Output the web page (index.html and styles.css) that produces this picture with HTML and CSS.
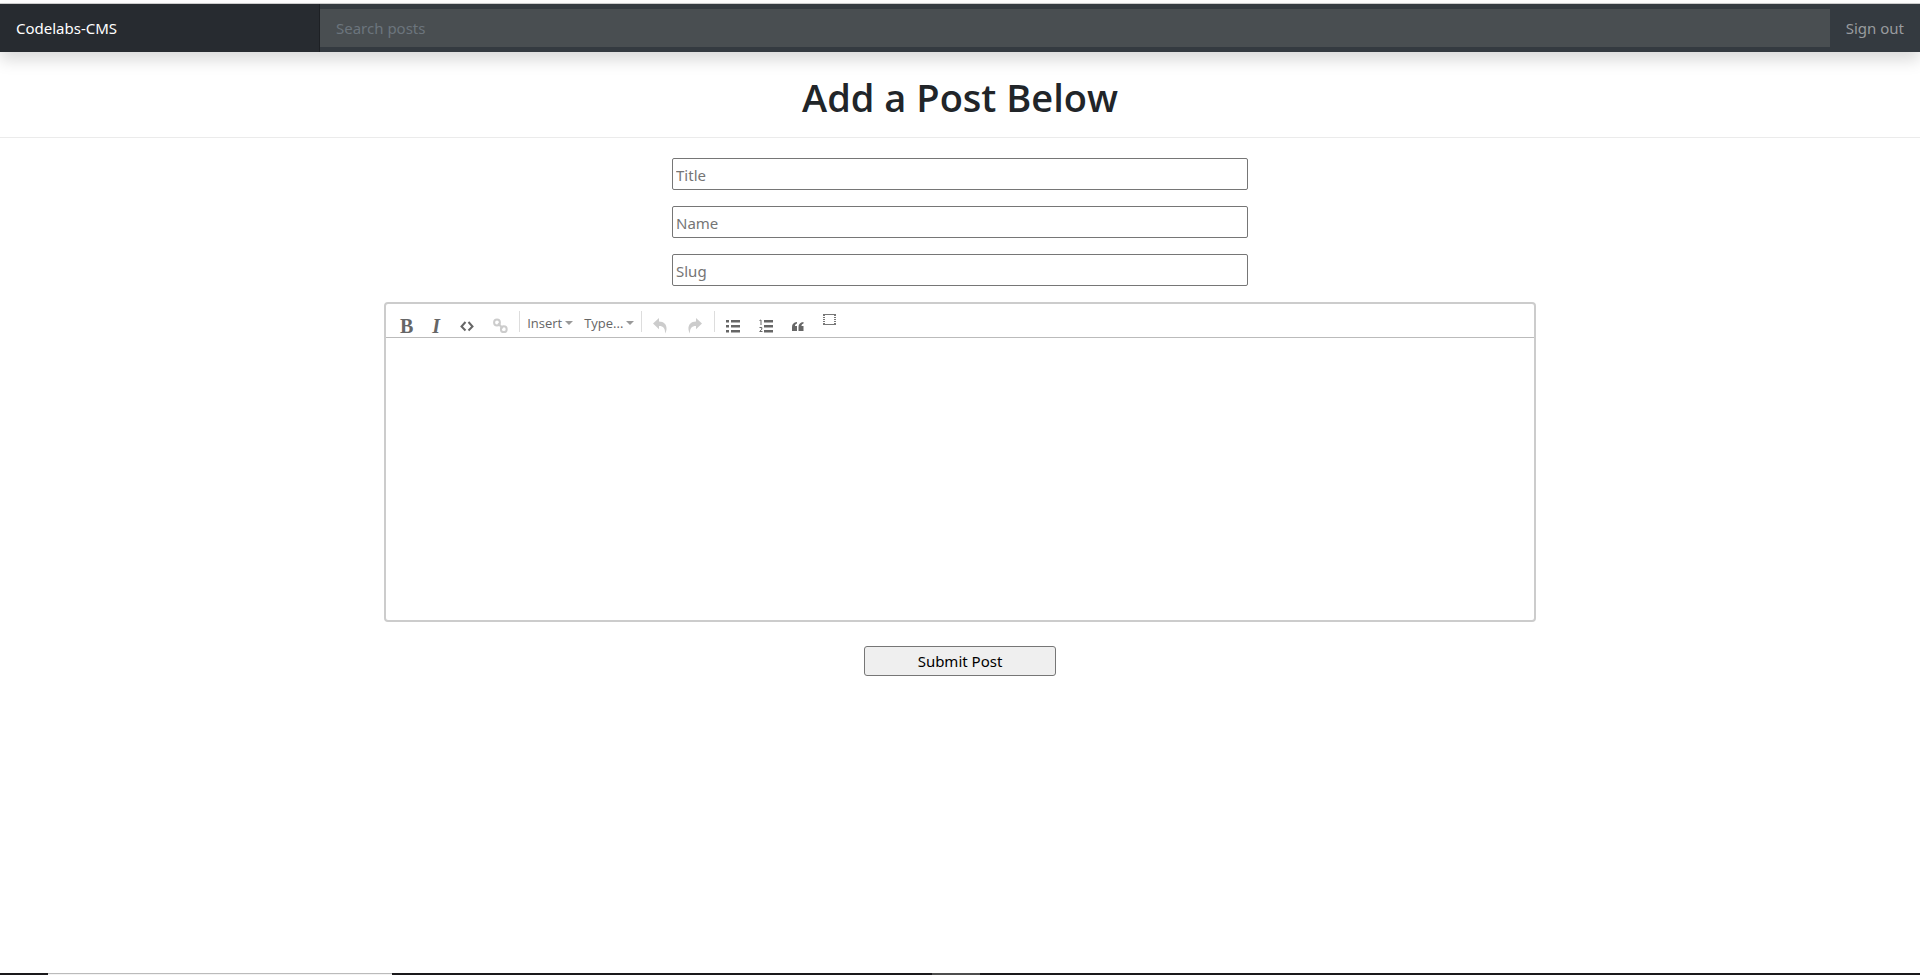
FILE: index.html
```html
<!DOCTYPE html>
<html lang="en">
<head>
<meta charset="utf-8">
<title>Codelabs-CMS</title>
<link rel="stylesheet" href="styles.css">
</head>
<body>
<nav class="navbar">
  <a class="brand" href="#">Codelabs-CMS</a>
  <input class="search" type="text" placeholder="Search posts" aria-label="Search posts">
  <a class="signout" href="#">Sign out</a>
</nav>
<main class="main">
  <h1 class="heading">Add a Post Below</h1>
  <form class="form">
    <input class="field" type="text" placeholder="Title" aria-label="Title">
    <input class="field" type="text" placeholder="Name" aria-label="Name">
    <input class="field" type="text" placeholder="Slug" aria-label="Slug">
    <div class="editor">
      <div class="toolbar">
        <button class="tool letter" type="button" title="Bold">B</button>
        <button class="tool letter italic" type="button" title="Italic">I</button>
        <button class="tool" type="button" title="Code"><svg width="15" height="16" viewBox="0 0 15 16" fill="none" stroke="currentColor" stroke-width="2"><path d="M6.500 4 2.500 8.500l4 4M9.500 4l4 4.500-4 4"/></svg></button>
        <button class="tool off" type="button" title="Link" disabled><svg width="15" height="16" viewBox="0 0 15 16" fill="none" stroke="currentColor" stroke-width="2"><circle cx="4" cy="4.500" r="2.900"/><circle cx="10.800" cy="11.200" r="2.900"/><path d="M5 5.500l4.800 4.800"/></svg></button>
        <span class="sep"></span>
        <button class="drop" type="button">Insert</button>
        <button class="drop" type="button">Type...</button>
        <span class="sep"></span>
        <button class="tool off" type="button" title="Undo" disabled><svg width="15" height="16" viewBox="0 0 15 16" fill="currentColor"><path d="M0 5.500 6 0v3.500c5 0 8 3 7.500 8-.2 1.500-.6 2.600-1.500 4 .4-5-1.500-7.500-6-7.500v3.200z"/></svg></button>
        <button class="tool off" type="button" title="Redo" disabled><svg width="16" height="16" viewBox="0 0 16 16" fill="currentColor"><path d="M15 5.500 9 0v3.500c-5 0-8 3-7.500 8 .2 1.500.6 2.600 1.500 4-.4-5 1.500-7.500 6-7.500v3.200z"/></svg></button>
        <span class="sep"></span>
        <button class="tool" type="button" title="Bullet list"><svg width="14" height="16" viewBox="0 0 14 16" fill="currentColor"><path d="M0 2h3v2.500H0zM0 7h3v2.500H0zM0 12h3v2.500H0zM5 2h9v2.500H5zM5 7h9v2.500H5zM5 12h9v2.500H5z"/></svg></button>
        <button class="tool" type="button" title="Numbered list"><svg width="14" height="16" viewBox="0 0 14 16" fill="currentColor"><path d="M5 2h9v2.500H5zM5 7h9v2.500H5zM5 12h9v2.500H5z"/><path d="M.5 2.500 2 2v5M.5 9.500h2.300v1.700L.7 13.500H3.500" fill="none" stroke="currentColor"/></svg></button>
        <button class="tool" type="button" title="Quote"><svg width="12" height="16" viewBox="0 0 12 16" fill="currentColor"><path d="M5 4v1.500C3.500 6 3 6.800 3 8h2v5H0V9c0-2.800 1.500-4.500 5-5zM11.500 4v1.500C10 6 9.500 6.800 9.500 8h2v5h-5V9c0-2.800 1.500-4.500 5-5z"/></svg></button>
        <button class="tool box" type="button" title="Select node"><svg width="13" height="12" viewBox="0 0 13 12" fill="none" stroke="#777"><path d="M0 .5h13M0 10.500h13"/><path d="M1 1v10M12 1v10" stroke-width="2" stroke-dasharray="1 1"/></svg></button>
      </div>
      <div class="content" contenteditable="true" role="textbox" aria-label="Post content"></div>
    </div>
    <button class="submit" type="submit">Submit Post</button>
  </form>
</main>
<div class="taskbar"><span class="task open"></span><span class="task active"></span></div>
</body>
</html>
```
FILE: styles.css
```css
* { box-sizing: border-box; }
body {
  margin: 0;
  min-height: 100vh;
  display: flex;
  flex-direction: column;
  background: #fff;
  color: #212529;
  font: 15px/24px "Noto Sans", "Open Sans", sans-serif;
}
input, button { font: inherit; }
.navbar {
  display: flex;
  align-items: center;
  height: 48px;
  margin-top: 4px;
  background: #343a40;
  box-shadow: 0 -1px 0 #ccc, 0 8px 16px rgba(0, 0, 0, .15);
}
.brand {
  width: 16.6667%;
  padding: 12px 16px;
  background: rgba(0, 0, 0, .25);
  box-shadow: inset -1px 0 0 rgba(0, 0, 0, .25);
  color: #fff;
  text-decoration: none;
}
.search {
  flex: 1;
  min-width: 0;
  height: 38px;
  padding: 0 16px;
  border: 0;
  background: #494e51;
  color: #fff;
}
.search::placeholder { color: #6c757d; }
.signout { padding: 0 16px; color: #999c9f; text-decoration: none; }
.main { flex: 1; }
.heading {
  margin: 0 0 20px;
  padding: 21px 0 16px;
  border-bottom: 1px solid #ebebeb;
  font-family: "Open Sans", "Noto Sans", sans-serif;
  font-size: 38px;
  line-height: 48px;
  font-weight: 600;
  text-align: center;
}
.form { display: flex; flex-direction: column; align-items: center; }
.field {
  width: 30%;
  height: 32px;
  margin-bottom: 16px;
  padding: 3px 3px 1px;
  border: 1px solid #767676;
  border-radius: 2px;
}
.field::placeholder { color: #757575; }
.editor {
  width: 60%;
  border: 2px solid #ccc;
  border-radius: 4px;
}
.toolbar {
  display: flex;
  align-items: flex-start;
  height: 34px;
  padding: 7px 6px 0;
  border-bottom: 1px solid #bbb;
  color: #666;
}
.tool {
  display: flex;
  margin: 7px 3px 0 0;
  padding: 0 8px;
  border: 0;
  background: none;
  color: #666;
}
.off { color: #ccc; }
.box { margin-top: 3px; }
.letter { font: bold 20px/16px "Liberation Serif", serif; }
.italic { font-style: italic; }
.sep { width: 1px; height: 21px; margin-right: 3px; background: #ddd; }
.drop {
  display: flex;
  align-items: center;
  gap: 3px;
  margin-right: 3px;
  padding: 0 4px;
  border: 0;
  background: none;
  color: #666;
  font-family: "Open Sans", "Noto Sans", sans-serif;
  font-size: 13px;
}
.drop::after {
  content: "";
  border: 4px solid transparent;
  border-top-color: #999;
  border-bottom: 0;
}
.content { height: 282px; outline: 0; }
.submit {
  width: 10%;
  height: 30px;
  margin-top: 24px;
  padding: 0;
  border: 1px solid #767676;
  border-radius: 3px;
  background: #efefef;
  color: #000;
}
.taskbar { display: flex; height: 2px; padding-left: 48px; background: #1a191b; }
.open { width: 344px; margin-right: 540px; border-top: 1px solid #bbb; background: #f3f3f3; }
.active { width: 48px; background: #4d4d4d; }
```
